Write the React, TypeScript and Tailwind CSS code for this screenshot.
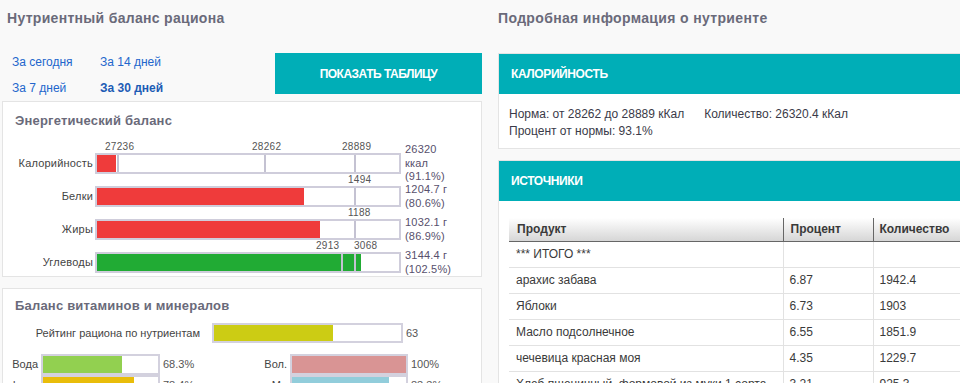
import React from "react";

const F = { fontFamily: '"Liberation Sans", Arial, sans-serif' };

type Tick = { pos: number; label: string; lx: number };
type Row = { name: string; fill: number; color: string; ticks: Tick[]; text: string[] };

const rows: Row[] = [
  {
    name: "Калорийность",
    fill: 19,
    color: "bg-[#ef3b3b]",
    ticks: [
      { pos: 20, label: "27236", lx: 8 },
      { pos: 167, label: "28262", lx: 155 },
      { pos: 257, label: "28889", lx: 245 },
    ],
    text: ["26320", "ккал", "(91.1%)"],
  },
  {
    name: "Белки",
    fill: 207,
    color: "bg-[#ef3b3b]",
    ticks: [{ pos: 257, label: "1494", lx: 251 }],
    text: ["1204.7 г", "(80.6%)"],
  },
  {
    name: "Жиры",
    fill: 223,
    color: "bg-[#ef3b3b]",
    ticks: [{ pos: 257, label: "1188", lx: 251 }],
    text: ["1032.1 г", "(86.9%)"],
  },
  {
    name: "Углеводы",
    fill: 264,
    color: "bg-[#21ab34]",
    ticks: [
      { pos: 244, label: "2913", lx: 219 },
      { pos: 257, label: "3068", lx: 257 },
    ],
    text: ["3144.4 г", "(102.5%)"],
  },
];

type V = { name: string; fill: number; color: string; pct: string };
const vitLeft: V[] = [
  { name: "Вода", fill: 79, color: "bg-[#92d050]", pct: "68.3%" },
  { name: "b-car", fill: 91, color: "bg-[#e9bd0a]", pct: "78.4%" },
];
const vitRight: V[] = [
  { name: "Вол.", fill: 114, color: "bg-[#d99494]", pct: "100%" },
  { name: "Mg", fill: 97, color: "bg-[#92cddb]", pct: "83.3%" },
];

const tableRows = [
  ["*** ИТОГО ***", "", ""],
  ["арахис забава", "6.87", "1942.4"],
  ["Яблоки", "6.73", "1903"],
  ["Масло подсолнечное", "6.55", "1851.9"],
  ["чечевица красная моя", "4.35", "1229.7"],
  ["Хлеб пшеничный, формовой из муки 1 сорта", "3.21", "925.3"],
];

function VitRow({ v, labelW, boxW }: { v: V; labelW: string; boxW: string }) {
  return (
    <div className="flex h-[21px] items-center">
      <div className={`${labelW} text-right text-[11px] text-[#444]`}>{v.name}</div>
      <div className={`relative ml-[3px] h-[21px] ${boxW} border-2 border-[#d3d1de] bg-white`}>
        <div className={`h-full ${v.color}`} style={{ width: v.fill }} />
      </div>
      <div className="ml-[3px] text-[11px] text-[#555]">{v.pct}</div>
    </div>
  );
}

export default function App() {
  return (
    <div style={F} className="flex h-[383px] w-[960px] overflow-hidden bg-[#f9f9f9]">
      {/* Left column */}
      <div className="ml-[2px] w-[480px] shrink-0">
        <div className="flex h-[36px] items-center pl-[5px] text-[14px] font-bold tracking-[0.3px] text-[#6a6a7a]">
          Нутриентный баланс рациона
        </div>
        <div className="flex h-[65px]">
          <div className="grid grid-cols-[88px_100px] pl-[10px] pt-[14px] text-[12px] leading-[24px] text-[#2266cc]">
            <span>За сегодня</span>
            <span>За 14 дней</span>
            <span>За 7 дней</span>
            <span className="font-bold text-[#1d5cb5]">За 30 дней</span>
          </div>
          <div className="ml-auto mt-[17px] flex h-[41px] w-[207px] items-center justify-center bg-[#00aeb7] text-[12px] font-bold tracking-[-0.5px] text-white">
            ПОКАЗАТЬ ТАБЛИЦУ
          </div>
        </div>

        {/* Energy panel */}
        <div className="h-[176px] border border-[#e4e4e4] bg-white">
          <div className="flex h-[38px] items-center pl-[12px] text-[13px] font-bold tracking-[0.2px] text-[#6a6a7a]">
            Энергетический баланс
          </div>
          <div className="mt-[7px] flex flex-col">
            {rows.map((r) => (
              <div key={r.name} className="flex h-[33px] items-center">
                <div className="w-[90px] text-right text-[11px] tracking-[0.2px] text-[#444]">{r.name}</div>
                <div className="relative ml-[2px] h-[21px] w-[306px] border-2 border-[#cfcddb] bg-white">
                  <div className={`h-full ${r.color}`} style={{ width: r.fill }} />
                  {r.ticks.map((t) => (
                    <React.Fragment key={t.label}>
                      <div className="absolute top-0 h-full w-[2px] bg-[#c4c2d2]" style={{ left: t.pos }} />
                      <div
                        className="absolute top-[-13px] text-[10px] leading-[10px] tracking-[0.3px] text-[#555]"
                        style={{ left: t.lx }}
                      >
                        {t.label}
                      </div>
                    </React.Fragment>
                  ))}
                </div>
                <div className="ml-[4px] flex flex-col text-[11px] leading-[13.5px] tracking-[0.2px] text-[#57506c]">
                  {r.text.map((l) => (
                    <span key={l}>{l}</span>
                  ))}
                </div>
              </div>
            ))}
          </div>
        </div>

        {/* Vitamins panel */}
        <div className="mt-[11px] h-[120px] border border-[#e4e4e4] bg-white">
          <div className="flex h-[34px] items-center pl-[12px] text-[13px] font-bold tracking-[0.2px] text-[#6a6a7a]">
            Баланс витаминов и минералов
          </div>
          <div className="flex h-[20px] items-center">
            <div className="w-[197px] text-right text-[11px] text-[#444]">Рейтинг рациона по нутриентам</div>
            <div className="relative ml-[12px] h-[20px] w-[191px] border-2 border-[#d3d1de] bg-white">
              <div className="h-full bg-[#cccc14]" style={{ width: 119 }} />
            </div>
            <div className="ml-[3px] text-[11px] text-[#555]">63</div>
          </div>
          <div className="mt-[11px] flex">
            <div className="flex w-[247px] flex-col">
              {vitLeft.map((v) => (
                <VitRow key={v.name} v={v} labelW="w-[35px]" boxW="w-[119px]" />
              ))}
            </div>
            <div className="flex flex-col">
              {vitRight.map((v) => (
                <VitRow key={v.name} v={v} labelW="w-[37px]" boxW="w-[118px]" />
              ))}
            </div>
          </div>
        </div>
      </div>

      {/* Right column */}
      <div className="ml-[16px] w-[480px] shrink-0">
        <div className="flex h-[36px] items-center text-[14px] font-bold tracking-[0.35px] text-[#6a6a7a]">
          Подробная информация о нутриенте
        </div>
        <div className="mt-[17px] border border-[#e4e4e4] bg-white">
          <div className="flex h-[40px] items-center bg-[#00aeb7] pl-[12px] text-[12px] font-bold tracking-[-0.4px] text-white">
            КАЛОРИЙНОСТЬ
          </div>
          <div className="pb-[8px] pl-[10px] pt-[12px] text-[12px] leading-[17px] text-[#3a3a48]">
            <div className="flex">
              <span>Норма: от 28262 до 28889 кКал</span>
              <span className="ml-[20px]">Количество: 26320.4 кКал</span>
            </div>
            <div>Процент от нормы: 93.1%</div>
          </div>
        </div>

        <div className="mt-[11px] h-[300px] border border-[#e4e4e4] bg-white">
          <div className="flex h-[40px] items-center bg-[#00aeb7] pl-[12px] text-[12px] font-bold tracking-[-0.4px] text-white">
            ИСТОЧНИКИ
          </div>
          <div className="pl-[10px] pt-[17px]">
            <table className="w-[454px] table-fixed border-collapse text-[12px] text-[#3a3a3a]">
              <colgroup>
                <col className="w-[274px]" />
                <col className="w-[90px]" />
                <col className="w-[90px]" />
              </colgroup>
              <thead>
                <tr className="h-[23px] bg-gradient-to-b from-white to-[#d6d6d6] font-bold">
                  <th className="border-b border-[#666] pl-[8px] text-left font-bold">Продукт</th>
                  <th className="border-b border-l border-[#666] pl-[7px] text-left font-bold">Процент</th>
                  <th className="border-b border-l border-[#666] pl-[6px] text-left font-bold">Количество</th>
                </tr>
              </thead>
              <tbody>
                {tableRows.map((r, i) => (
                  <tr key={i} className="h-[26px]">
                    <td className="overflow-hidden whitespace-nowrap border-b border-[#e2e2e2] pl-[7px]">{r[0]}</td>
                    <td className="border-b border-l border-[#e2e2e2] pl-[6px]">{r[1]}</td>
                    <td className="border-b border-l border-[#e2e2e2] pl-[6px]">{r[2]}</td>
                  </tr>
                ))}
              </tbody>
            </table>
          </div>
        </div>
      </div>
    </div>
  );
}
